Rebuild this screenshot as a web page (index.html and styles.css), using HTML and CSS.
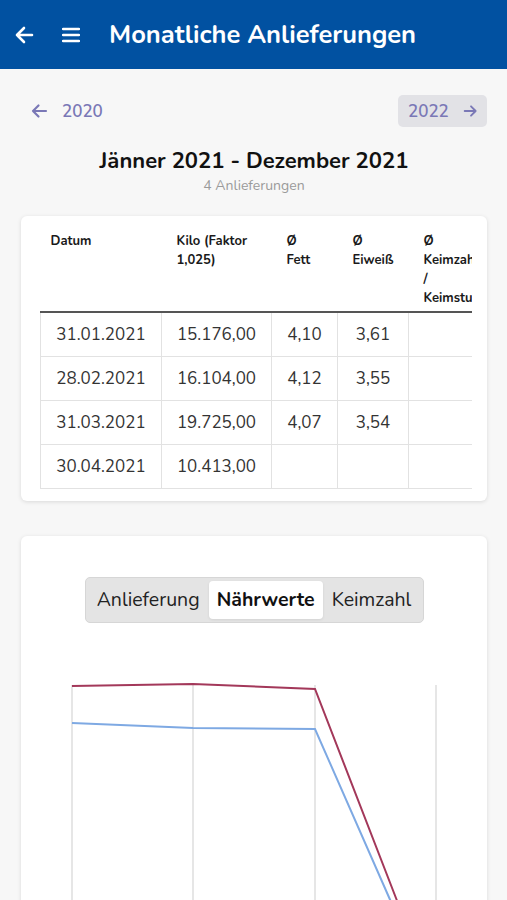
FILE: index.html
```html
<!DOCTYPE html>
<html lang="de">
<head>
<meta charset="utf-8">
<title>Monatliche Anlieferungen</title>
<link rel="stylesheet" href="styles.css">
</head>
<body>
<header class="appbar">
  <button class="icon-btn" aria-label="Zurück">
    <svg width="20" height="20" viewBox="0 0 20 20"><path d="M18 10H3M10 3L3 10L10 17" fill="none" stroke="#fff" stroke-width="2.6" stroke-linecap="round" stroke-linejoin="round"/></svg>
  </button>
  <button class="icon-btn" aria-label="Menü">
    <svg width="18" height="16" viewBox="0 0 18 16"><path d="M1 2H17M1 8H17M1 14H17" fill="none" stroke="#fff" stroke-width="2.4" stroke-linecap="round"/></svg>
  </button>
  <h1 class="appbar-title">Monatliche Anlieferungen</h1>
</header>

<main class="content">
  <nav class="yearnav">
    <a class="year-link">
      <svg width="18" height="18" viewBox="0 0 18 18"><path d="M16 9H3M8.5 3.5L3 9L8.5 14.5" fill="none" stroke="currentColor" stroke-width="2.2" stroke-linecap="round" stroke-linejoin="round"/></svg>
      <span>2020</span>
    </a>
    <a class="year-link year-link--next">
      <span>2022</span>
      <svg width="18" height="18" viewBox="0 0 18 18"><path d="M2 9H15M9.5 3.5L15 9L9.5 14.5" fill="none" stroke="currentColor" stroke-width="2.2" stroke-linecap="round" stroke-linejoin="round"/></svg>
    </a>
  </nav>

  <h2 class="period">Jänner 2021 - Dezember 2021</h2>
  <p class="period-sub">4 Anlieferungen</p>

  <section class="card card--table">
    <div class="table-scroll">
      <table class="data">
        <colgroup>
          <col class="c-datum"><col class="c-kilo"><col class="c-fett"><col class="c-eiweiss"><col class="c-keim">
        </colgroup>
        <thead>
          <tr>
            <th class="th-first">Datum</th>
            <th>Kilo (Faktor 1,025)</th>
            <th>Ø<br>Fett</th>
            <th>Ø<br>Eiweiß</th>
            <th>Ø<br>Keimzahl<br>/<br>Keimstufe</th>
          </tr>
        </thead>
        <tbody>
          <tr><td>31.01.2021</td><td>15.176,00</td><td>4,10</td><td>3,61</td><td></td></tr>
          <tr><td>28.02.2021</td><td>16.104,00</td><td>4,12</td><td>3,55</td><td></td></tr>
          <tr><td>31.03.2021</td><td>19.725,00</td><td>4,07</td><td>3,54</td><td></td></tr>
          <tr><td>30.04.2021</td><td>10.413,00</td><td></td><td></td><td></td></tr>
        </tbody>
      </table>
    </div>
  </section>

  <section class="card card--chart">
    <div class="segmented">
      <span class="seg">Anlieferung</span>
      <span class="seg seg--active">Nährwerte</span>
      <span class="seg">Keimzahl</span>
    </div>
    <svg class="chart" width="466" height="300" viewBox="0 0 466 300">
      <g stroke="#e6e6e6" stroke-width="2">
        <line x1="51" y1="44" x2="51" y2="300"/>
        <line x1="172" y1="44" x2="172" y2="300"/>
        <line x1="294" y1="44" x2="294" y2="300"/>
        <line x1="415" y1="44" x2="415" y2="300"/>
      </g>
      <polyline points="51,45 172,43 294,48 380,270" fill="none" stroke="#a3385a" stroke-width="2"/>
      <polyline points="51,82 172,87 294,88 374,270" fill="none" stroke="#7ea9e3" stroke-width="2"/>
    </svg>
  </section>
</main>
</body>
</html>
```

FILE: styles.css
```css
* { box-sizing: border-box; }

html, body {
  margin: 0;
  padding: 0;
  background: #f7f7f7;
  font-family: "Nunito", Lato, "Noto Sans", sans-serif;
  color: #1a1a1a;
  overflow: hidden;
}

.appbar {
  height: 69px;
  background: #0151a1;
  display: flex;
  align-items: center;
  padding: 0 0 0 14px;
}

.icon-btn {
  background: none;
  border: 0;
  padding: 0;
  display: flex;
  align-items: center;
  justify-content: center;
}
.icon-btn:first-child { width: 20px; margin-right: 28px; }
.icon-btn:nth-child(2) { width: 18px; margin-right: 29px; }

.appbar-title {
  margin: 0;
  color: #fff;
  font-size: 25.5px;
  font-weight: 700;
}

.content {
  padding: 0 20px 0 21px;
}

.yearnav {
  display: flex;
  justify-content: space-between;
  align-items: center;
  margin-top: 26px;
}

.year-link {
  display: flex;
  align-items: center;
  height: 32px;
  color: #7a78b6;
  font-size: 17px;
  font-weight: 600;
  gap: 14px;
  padding: 0 9px;
  border-radius: 5px;
}

.year-link--next {
  background: #e2e2e6;
  padding: 0 9px 0 10px;
  width: 89px;
}

.period {
  margin: 19px 0 0;
  text-align: center;
  font-size: 22px;
  font-weight: 700;
  line-height: 30px;
  color: #111;
}

.period-sub {
  margin: 1px 0 0;
  text-align: center;
  font-size: 14px;
  line-height: 18px;
  color: #9a9a9a;
}

.card {
  background: #fff;
  border-radius: 6px;
  box-shadow: 0 1px 4px rgba(0,0,0,0.12);
}

.card--table {
  margin-top: 21px;
  padding: 16px 15px 12px 19px;
}

.table-scroll {
  overflow: hidden;
}

.data {
  border-collapse: collapse;
  table-layout: fixed;
  width: 521px;
}
.c-datum { width: 121px; }
.c-kilo { width: 110px; }
.c-fett { width: 66px; }
.c-eiweiss { width: 71px; }
.c-keim { width: 153px; }

.data th {
  text-align: left;
  vertical-align: top;
  font-size: 13px;
  font-weight: 700;
  line-height: 19px;
  padding: 0 4px 3px 15px;
  border-bottom: 2px solid #555;
  white-space: normal;
}
.data th.th-first { padding-left: 10px; }

.data td {
  height: 44px;
  text-align: center;
  font-size: 17px;
  color: #333;
  border: 1px solid #e2e2e2;
  padding: 0;
}
.data tbody tr:first-child td { border-top: 0; }

.card--chart {
  margin-top: 35px;
  padding-top: 41px;
  height: 400px;
}

.segmented {
  width: 339px;
  height: 46px;
  margin: 0 auto;
  display: flex;
  align-items: center;
  justify-content: center;
  gap: 1px;
  background: #e4e4e4;
  border: 1px solid #d6d6d6;
  border-radius: 5px;
}

.seg {
  font-size: 19.5px;
  color: #222;
  height: 38px;
  display: flex;
  align-items: center;
  padding: 0 8px;
  white-space: nowrap;
}

.seg--active {
  background: #fff;
  border-radius: 4px;
  font-weight: 700;
  color: #111;
  box-shadow: 0 1px 3px rgba(0,0,0,0.08);
}

.chart {
  display: block;
  margin-top: 18px;
}
```
